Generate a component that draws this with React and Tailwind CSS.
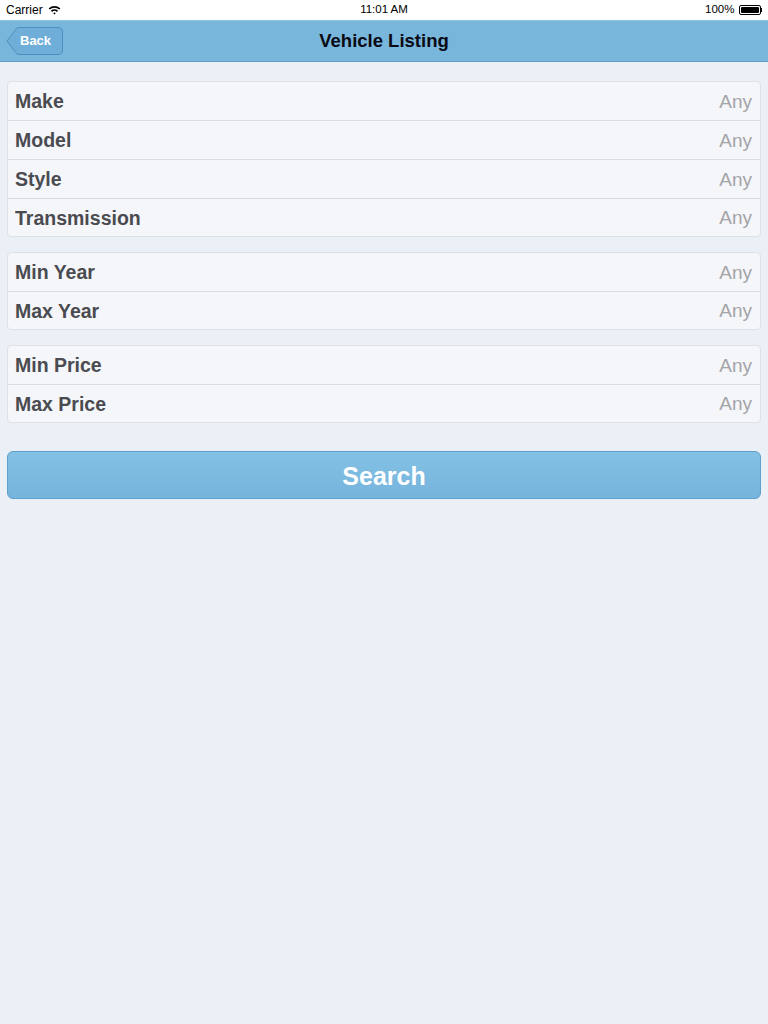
import React from "react";

const font = { fontFamily: '"Liberation Sans", Arial, Helvetica, sans-serif' };

function Row({ label, last }) {
  return (
    <div className={`flex items-center justify-between pl-[7px] pr-[8px] pt-[2px] ${last ? "h-[37px]" : "h-[39px] border-b border-[#d8dce2]"}`}>
      <span className="text-[19.5px] font-bold text-[#4a4b50]">{label}</span>
      <span className="text-[19px] text-[#a3a4a8]">Any</span>
    </div>
  );
}

function Group({ labels }) {
  return (
    <div className="bg-[#f5f6f9] border border-[#dde1e6] rounded-[4px] overflow-hidden">
      {labels.map((l, i) => (
        <Row key={l} label={l} last={i === labels.length - 1} />
      ))}
    </div>
  );
}

export default function App() {
  return (
    <div className="w-[768px] h-[1024px] bg-[#ebf0f7] flex flex-col" style={font}>
      {/* status bar */}
      <div className="h-[20px] bg-white flex items-center justify-between px-[6px] text-[12px] text-black">
        <div className="flex items-center gap-[5px]">
          <span className="font-medium">Carrier</span>
          <svg width="13" height="10" viewBox="0 0 13 10">
            <path d="M0.6 3.4 A8.5 8.5 0 0 1 12.4 3.4 L11.2 4.6 A6.8 6.8 0 0 0 1.8 4.6 Z" fill="#000" />
            <path d="M2.9 5.7 A5.3 5.3 0 0 1 10.1 5.7 L8.9 6.9 A3.6 3.6 0 0 0 4.1 6.9 Z" fill="#000" />
            <path d="M5.2 8 A2 2 0 0 1 7.8 8 L6.5 9.4 Z" fill="#000" />
          </svg>
        </div>
        <span className="font-medium absolute left-1/2 -translate-x-1/2 text-[11.5px]">11:01 AM</span>
        <div className="flex items-center gap-[4px]">
          <span className="font-medium text-[11.5px]">100%</span>
          <div className="flex items-center">
            <div className="w-[22px] h-[10px] border border-black rounded-[2px] p-[1px]">
              <div className="w-full h-full bg-black rounded-[1px]" />
            </div>
            <div className="w-[1.5px] h-[4px] bg-black" />
          </div>
        </div>
      </div>
      {/* nav bar */}
      <div className="relative h-[42px] bg-[#78b6dc] border-b border-[#5f9cc6] border-t border-t-[#8cc3e4] flex items-center justify-center">
        <div className="absolute left-[6px] top-[6px] w-[57px] h-[28px]">
          <svg width="57" height="28" viewBox="0 0 57 28" className="absolute inset-0">
            <path d="M1 14 L10.5 1.5 Q11.5 0.5 13 0.5 L52 0.5 Q56.5 0.5 56.5 5 L56.5 23 Q56.5 27.5 52 27.5 L13 27.5 Q11.5 27.5 10.5 26.5 Z" fill="#6eaed8" stroke="#4f8fbd" strokeWidth="1" />
          </svg>
          <span className="absolute left-[14px] top-0 h-[28px] flex items-center text-[13px] font-bold text-white">Back</span>
        </div>
        <span className="text-[18.5px] font-bold text-[#0a0a14]">Vehicle Listing</span>
      </div>
      {/* content */}
      <div className="px-[7px] pt-[19px] flex flex-col gap-[15px]">
        <Group labels={["Make", "Model", "Style", "Transmission"]} />
        <Group labels={["Min Year", "Max Year"]} />
        <Group labels={["Min Price", "Max Price"]} />
        <button className="mt-[13px] h-[48px] pt-[3px] rounded-[6px] border border-[#5e9fcb] bg-gradient-to-b from-[#83c1e5] to-[#76b4dc] flex items-center justify-center text-[25px] font-bold text-white">
          Search
        </button>
      </div>
    </div>
  );
}
